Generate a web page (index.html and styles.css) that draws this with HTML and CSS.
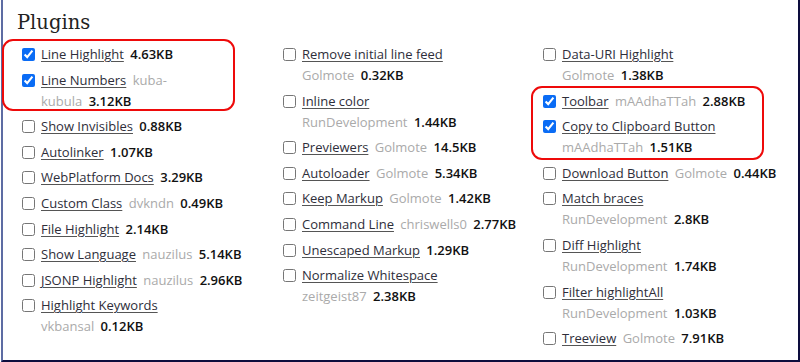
FILE: index.html
```html
<!DOCTYPE html>
<html>
<head>
<meta charset="utf-8">
<link rel="stylesheet" href="styles.css">
</head>
<body>
<div class="frame">
  <h2 class="title">Plugins</h2>
  <div class="grid">
    <div class="col">
      <label class="item"><input type="checkbox" checked><span class="txt"><a>Line Highlight</a> <b>4.63KB</b></span></label>
      <label class="item"><input type="checkbox" checked><span class="txt"><a>Line Numbers</a> <i>kuba-</i><br><i>kubula</i> <b>3.12KB</b></span></label>
      <label class="item"><input type="checkbox"><span class="txt"><a>Show Invisibles</a> <b>0.88KB</b></span></label>
      <label class="item"><input type="checkbox"><span class="txt"><a>Autolinker</a> <b>1.07KB</b></span></label>
      <label class="item"><input type="checkbox"><span class="txt"><a>WebPlatform Docs</a> <b>3.29KB</b></span></label>
      <label class="item"><input type="checkbox"><span class="txt"><a>Custom Class</a> <i>dvkndn</i> <b>0.49KB</b></span></label>
      <label class="item"><input type="checkbox"><span class="txt"><a>File Highlight</a> <b>2.14KB</b></span></label>
      <label class="item"><input type="checkbox"><span class="txt"><a>Show Language</a> <i>nauzilus</i> <b>5.14KB</b></span></label>
      <label class="item"><input type="checkbox"><span class="txt"><a>JSONP Highlight</a> <i>nauzilus</i> <b>2.96KB</b></span></label>
      <label class="item"><input type="checkbox"><span class="txt"><a>Highlight Keywords</a><br><i>vkbansal</i> <b>0.12KB</b></span></label>
      <div class="mark mark-left"></div>
    </div>
    <div class="col">
      <label class="item"><input type="checkbox"><span class="txt"><a>Remove initial line feed</a><br><i>Golmote</i> <b>0.32KB</b></span></label>
      <label class="item"><input type="checkbox"><span class="txt"><a>Inline color</a><br><i>RunDevelopment</i> <b>1.44KB</b></span></label>
      <label class="item"><input type="checkbox"><span class="txt"><a>Previewers</a> <i>Golmote</i> <b>14.5KB</b></span></label>
      <label class="item"><input type="checkbox"><span class="txt"><a>Autoloader</a> <i>Golmote</i> <b>5.34KB</b></span></label>
      <label class="item"><input type="checkbox"><span class="txt"><a>Keep Markup</a> <i>Golmote</i> <b>1.42KB</b></span></label>
      <label class="item"><input type="checkbox"><span class="txt"><a>Command Line</a> <i>chriswells0</i> <b>2.77KB</b></span></label>
      <label class="item"><input type="checkbox"><span class="txt"><a>Unescaped Markup</a> <b>1.29KB</b></span></label>
      <label class="item"><input type="checkbox"><span class="txt"><a>Normalize Whitespace</a><br><i>zeitgeist87</i> <b>2.38KB</b></span></label>
    </div>
    <div class="col">
      <label class="item"><input type="checkbox"><span class="txt"><a>Data-URI Highlight</a><br><i>Golmote</i> <b>1.38KB</b></span></label>
      <label class="item"><input type="checkbox" checked><span class="txt"><a>Toolbar</a> <i>mAAdhaTTah</i> <b>2.88KB</b></span></label>
      <label class="item"><input type="checkbox" checked><span class="txt"><a>Copy to Clipboard Button</a><br><i>mAAdhaTTah</i> <b>1.51KB</b></span></label>
      <label class="item"><input type="checkbox"><span class="txt"><a>Download Button</a> <i>Golmote</i> <b>0.44KB</b></span></label>
      <label class="item"><input type="checkbox"><span class="txt"><a>Match braces</a><br><i>RunDevelopment</i> <b>2.8KB</b></span></label>
      <label class="item"><input type="checkbox"><span class="txt"><a>Diff Highlight</a><br><i>RunDevelopment</i> <b>1.74KB</b></span></label>
      <label class="item"><input type="checkbox"><span class="txt"><a>Filter highlightAll</a><br><i>RunDevelopment</i> <b>1.03KB</b></span></label>
      <label class="item"><input type="checkbox"><span class="txt"><a>Treeview</a> <i>Golmote</i> <b>7.91KB</b></span></label>
      <div class="mark mark-right"></div>
    </div>
  </div>
</div>
</body>
</html>
```
FILE: styles.css
```css
html, body {
  margin: 0;
  padding: 0;
  background: #fff;
}
.frame {
  box-sizing: border-box;
  width: 799px;
  height: 362px;
  margin-left: 1px;
  border-left: 2px solid #5d6ca3;
  border-right: 2px solid #0d0d3d;
  border-bottom: 2px solid #0d0d3d;
  padding: 0 0 0 14px;
  font-family: "Open Sans", sans-serif;
  font-size: 13px;
  color: #111;
}
.title {
  margin: 0;
  padding-top: 9px;
  font-family: "DejaVu Serif", serif;
  font-weight: normal;
  font-size: 19.5px;
  line-height: 28px;
  color: #222;
}
.grid {
  display: grid;
  grid-template-columns: 261px 260px 260px;
  margin-top: 7px;
  margin-left: 1px;
}
.col {
  position: relative;
  display: flex;
  flex-direction: column;
  gap: 4.6px;
}
.item {
  display: flex;
  align-items: flex-start;
  line-height: 21px;
  white-space: nowrap;
}
.item input {
  width: 13px;
  height: 13px;
  margin: 4px 6px 0 4px;
  flex: none;
  accent-color: #0a6cf5;
}
.txt a {
  color: #2e2e3a;
  text-decoration: underline;
  text-decoration-color: #555;
  text-underline-offset: 2px;
  margin-right: 3px;
}
.txt i {
  font-style: normal;
  color: #aaa;
  margin-right: 3px;
}
.txt b {
  font-weight: 600;
  color: #111;
}
.mark {
  position: absolute;
  border: 2.5px solid #ee0a0a;
  border-radius: 11px;
}
.mark-left {
  left: -16px;
  top: -5px;
  width: 229px;
  height: 68px;
}
.mark-right {
  left: -8px;
  top: 42px;
  width: 229px;
  height: 70px;
}
```
